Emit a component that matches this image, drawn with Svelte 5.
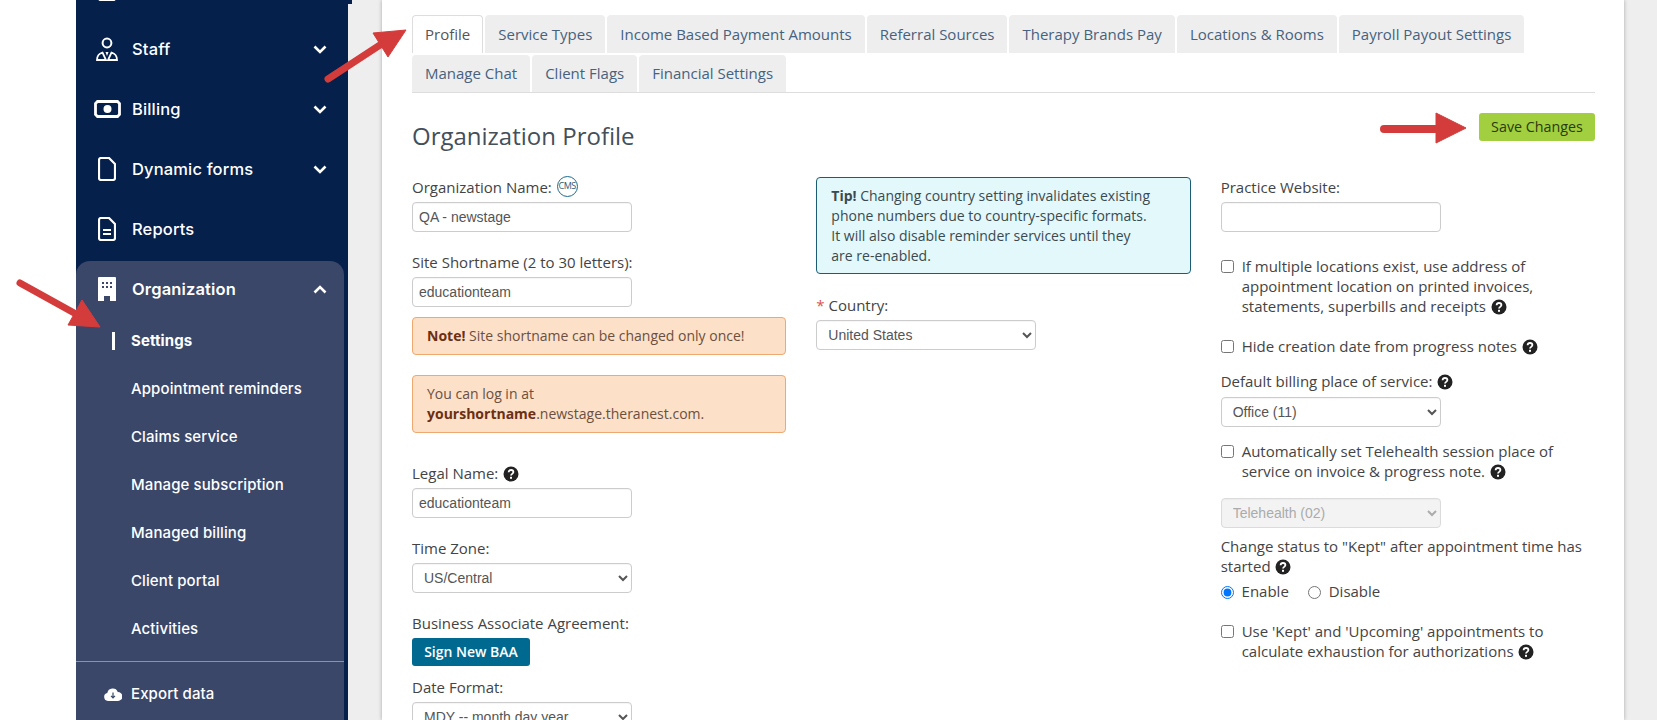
<script lang="ts">
	const tabs = [
		'Profile',
		'Service Types',
		'Income Based Payment Amounts',
		'Referral Sources',
		'Therapy Brands Pay',
		'Locations & Rooms',
		'Payroll Payout Settings',
		'Manage Chat',
		'Client Flags',
		'Financial Settings'
	];
	const subItems = [
		'Settings',
		'Appointment reminders',
		'Claims service',
		'Manage subscription',
		'Managed billing',
		'Client portal',
		'Activities'
	];
</script>

{#snippet help()}
	<svg class="help" viewBox="0 0 16 16" aria-hidden="true">
		<circle cx="8" cy="8" r="7.5" fill="#222" />
		<path d="M5.6 6.2C5.7 4.8 6.7 4 8 4c1.4 0 2.4.8 2.4 2 0 1.9-2.4 1.8-2.4 3.6" fill="none" stroke="#fff" stroke-width="1.8" />
		<rect x="7" y="10.8" width="2" height="2" fill="#fff" />
	</svg>
{/snippet}

{#snippet chevron(up = false)}
	<svg class="chev" viewBox="0 0 14 9" aria-hidden="true">
		<path d={up ? 'M1.5 7.5 7 2l5.5 5.5' : 'M1.5 1.5 7 7l5.5-5.5'} fill="none" stroke="#fff" stroke-width="2.6" />
	</svg>
{/snippet}

<div class="page">
	<aside class="sidebar">
		<div class="scroll-thumb"></div>

		<div class="item">
			<span class="ic">
				<svg width="18" height="24" viewBox="0 0 18 24"><rect x="1" y="1" width="16" height="22" rx="2" fill="none" stroke="#fff" stroke-width="2.2" /></svg>
			</span>
		</div>
		<div class="item">
			<span class="ic">
				<svg width="22" height="24" viewBox="0 0 22 24">
					<circle cx="11" cy="6" r="4.4" fill="none" stroke="#fff" stroke-width="2" />
					<path d="M1 23c0-4.500 2-6.500 5.500-7.500L10 23ZM21 23c0-4.500-2-6.500-5.500-7.500L12 23Z" fill="none" stroke="#fff" stroke-width="1.800" />
					<path d="M9.500 15h3L11 19Z" fill="#fff" />
				</svg>
			</span>
			<span class="label">Staff</span>
			{@render chevron()}
		</div>
		<div class="item">
			<span class="ic">
				<svg width="27" height="18" viewBox="0 0 27 18">
					<path d="M3.500 1.500h20l2 2v11l-2 2h-20l-2-2v-11Z" fill="none" stroke="#fff" stroke-width="2.800" />
					<circle cx="13.500" cy="9" r="4" fill="#fff" />
				</svg>
			</span>
			<span class="label">Billing</span>
			{@render chevron()}
		</div>
		<div class="item">
			<span class="ic">
				<svg width="18" height="24" viewBox="0 0 18 24">
					<path d="M3 1h8l6 6v14a2 2 0 0 1-2 2H3a2 2 0 0 1-2-2V3a2 2 0 0 1 2-2Z" fill="none" stroke="#fff" stroke-width="2.2" />
				</svg>
			</span>
			<span class="label">Dynamic forms</span>
			{@render chevron()}
		</div>
		<div class="item">
			<span class="ic">
				<svg width="18" height="24" viewBox="0 0 18 24">
					<path d="M3 1h8l6 6v14a2 2 0 0 1-2 2H3a2 2 0 0 1-2-2V3a2 2 0 0 1 2-2Z" fill="none" stroke="#fff" stroke-width="2.2" />
					<path d="M5 13h8M5 17h8" stroke="#fff" stroke-width="2" />
				</svg>
			</span>
			<span class="label">Reports</span>
		</div>

		<div class="org">
			<div class="item org-head">
				<span class="ic">
					<svg width="18" height="24" viewBox="0 0 18 24">
						<path d="M1 0h16a1 1 0 0 1 1 1v23h-6v-5H6v5H0V1a1 1 0 0 1 1-1Z" fill="#fff" />
						<path d="M4 5h2v2H4zM8 5h2v2H8zM12 5h2v2h-2zM4 9h2v2H4zM8 9h2v2H8zM12 9h2v2h-2z" fill="#3a4769" />
					</svg>
				</span>
				<span class="label strong">Organization</span>
				{@render chevron(true)}
			</div>
			{#each subItems as sub, i}
				<div class="sub" class:active={i === 0}>{sub}</div>
			{/each}
			<div class="divider"></div>
			<div class="sub export">
				<svg width="18" height="13" viewBox="0 0 18 13">
					<path d="M4 13a4 4 0 0 1-.7-7.900A5.500 5.500 0 0 1 13.800 4 4.500 4.500 0 0 1 14 13Z" fill="#fff" />
					<path d="M9 4.500v5M7 7.800l2 2 2-2" fill="none" stroke="#3a4769" stroke-width="1.200" />
				</svg>
				Export data
			</div>
		</div>
	</aside>

	<div class="gutter">
		<main class="panel">
			<nav class="tabs">
				{#each tabs as tab, i}
					<button class="tab" class:current={i === 0}>{tab}</button>
				{/each}
			</nav>

			<div class="head">
				<h1>Organization Profile</h1>
				<button class="save">Save Changes</button>
			</div>

			<div class="cols">
				<section>
					<div class="label-row">Organization Name: <span class="cms">CMS</span></div>
					<input class="field" value="QA - newstage" />

					<div class="label-row gap">Site Shortname (2 to 30 letters):</div>
					<input class="field" value="educationteam" />
					<div class="note first"><b>Note!</b> Site shortname can be changed only once!</div>
					<div class="note">You can log in at<br /><b>yourshortname</b>.newstage.theranest.com.</div>

					<div class="label-row legal">Legal Name: {@render help()}</div>
					<input class="field" value="educationteam" />

					<div class="label-row gap">Time Zone:</div>
					<select class="field"><option>US/Central</option></select>

					<div class="label-row gap">Business Associate Agreement:</div>
					<button class="baa">Sign New BAA</button>

					<div class="label-row date">Date Format:</div>
					<select class="field"><option>MDY -- month day year</option></select>
				</section>

				<section>
					<div class="tip">
						<b>Tip!</b> Changing country setting invalidates existing<br />
						phone numbers due to country-specific formats.<br />
						It will also disable reminder services until they<br />
						are re-enabled.
					</div>
					<div class="label-row country"><span class="req">*</span> Country:</div>
					<select class="field"><option>United States</option></select>
				</section>

				<section>
					<div class="label-row">Practice Website:</div>
					<input class="field" />

					<label class="check first-check">
						<input type="checkbox" />
						<span>If multiple locations exist, use address of appointment location on printed invoices, statements, superbills and receipts {@render help()}</span>
					</label>
					<label class="check hide-date">
						<input type="checkbox" />
						<span>Hide creation date from progress notes {@render help()}</span>
					</label>

					<div class="label-row billing">Default billing place of service: {@render help()}</div>
					<select class="field"><option>Office (11)</option></select>

					<label class="check auto">
						<input type="checkbox" />
						<span>Automatically set Telehealth session place of service on invoice &amp; progress note. {@render help()}</span>
					</label>
					<select class="field tele" disabled><option>Telehealth (02)</option></select>

					<div class="kept">Change status to "Kept" after appointment time has started {@render help()}</div>
					<div class="radios">
						<label><input type="radio" name="kept" checked /> Enable</label>
						<label><input type="radio" name="kept" /> Disable</label>
					</div>

					<label class="check use-kept">
						<input type="checkbox" />
						<span>Use 'Kept' and 'Upcoming' appointments to calculate exhaustion for authorizations {@render help()}</span>
					</label>
				</section>
			</div>
		</main>
	</div>

	<!-- annotation arrows drawn over the screenshot -->
	<svg class="arrows" width="1657" height="720" viewBox="0 0 1657 720" aria-hidden="true">
		<g fill="#d43c3c" stroke="#d43c3c">
			<path d="M328 79 380 45" stroke-width="7" stroke-linecap="round" />
			<path d="M406 30 373 33 388 57Z" stroke-width="1" />
			<path d="M20 283 76 314" stroke-width="7" stroke-linecap="round" />
			<path d="M100 327 82 300 68 325Z" stroke-width="1" />
			<path d="M1384 129H1440" stroke-width="8" stroke-linecap="round" />
			<path d="M1466 128 1436 113V143Z" stroke-width="1" />
		</g>
	</svg>
</div>

<style>
	:global(body) {
		background: #fff;
	}

	.page {
		position: relative;
		display: flex;
		height: 720px;
		padding-left: 76px;
		overflow: hidden;
		font-family: 'Open Sans', sans-serif;
		font-size: 15px;
		line-height: 20px;
		color: #444;
	}

	.sidebar {
		position: relative;
		flex: none;
		width: 276px;
		height: 761px;
		margin-top: -41px;
		background: #05204a;
		font-family: Inter, sans-serif;
		color: #fff;
	}

	.scroll-thumb {
		position: absolute;
		top: 45px;
		right: 0;
		bottom: 0;
		width: 4px;
		background: #eee;
	}

	.item {
		display: flex;
		align-items: center;
		height: 60px;
		width: 268px;
		box-sizing: border-box;
		padding: 0 17px 0 0;
	}

	.ic {
		display: flex;
		justify-content: center;
		flex: none;
		width: 56px;
		padding-left: 6px;
		box-sizing: border-box;
	}

	.label {
		flex: 1;
		font-size: 16.5px;
		font-weight: 500;
		letter-spacing: 0.15px;
	}

	.label.strong {
		font-weight: 600;
	}

	.chev {
		width: 14px;
		height: 9px;
	}

	.org {
		width: 268px;
		margin-top: 2px;
		height: 500px;
		background: #3a4769;
		border-radius: 14px 14px 0 0;
	}

	.org-head {
		height: 56px;
	}

	.sub {
		position: relative;
		display: flex;
		align-items: center;
		height: 48px;
		padding-left: 55px;
		font-size: 15px;
		font-weight: 500;
		letter-spacing: 0.1px;
	}

	.sub.active {
		font-weight: 700;
	}

	.sub.active::before {
		content: '';
		position: absolute;
		left: 36px;
		top: 15px;
		width: 3px;
		height: 18px;
		background: #fff;
	}

	.divider {
		height: 1px;
		margin-top: 8px;
		background: #8a93a8;
	}

	.export {
		height: 64px;
		padding-left: 28px;
		gap: 9px;
	}

	.gutter {
		flex: 1;
		background: #eee;
		padding: 0 33px 0 30px;
	}

	.panel {
		height: 720px;
		box-sizing: border-box;
		padding: 15px 29px 0 30px;
		background: #fff;
		box-shadow: 0 0 4px rgba(0, 0, 0, 0.3);
	}

	.tabs {
		display: flex;
		flex-wrap: wrap;
		gap: 2px;
		border-bottom: 1px solid #ddd;
	}

	.tab {
		height: 37.5px;
		padding: 0 13px;
		border: none;
		border-radius: 4px 4px 0 0;
		background: #eee;
		font: inherit;
		color: #46627f;
	}

	.tab.current {
		padding: 0 12px;
		background: #fff;
		border: 1px solid #ddd;
		border-bottom: none;
		color: #555;
	}

	.head {
		display: flex;
		justify-content: space-between;
		align-items: flex-start;
		margin-top: 20px;
		margin-bottom: 24px;
	}

	h1 {
		margin: 6px 0 0;
		font-size: 24px;
		font-weight: 400;
		line-height: 34px;
		color: #444f5a;
	}

	.save {
		width: 116px;
		height: 28px;
		padding: 0;
		border: none;
		border-radius: 3px;
		background: #a2cf3f;
		font: inherit;
		font-size: 14.3px;
		color: #2b3a10;
	}

	.cols {
		display: grid;
		grid-template-columns: repeat(3, 1fr);
		column-gap: 30px;
		align-items: start;
	}

	.label-row {
		height: 20px;
		margin-bottom: 5px;
	}

	.label-row.gap {
		margin-top: 20px;
	}

	.label-row.legal {
		margin-top: 30px;
	}

	.label-row.date {
		margin-top: 11px;
	}

	.label-row.country {
		margin-top: 21px;
	}

	.label-row.billing {
		margin-top: 15px;
		margin-bottom: 6px;
	}

	.field {
		display: block;
		width: 220px;
		height: 30px;
		box-sizing: border-box;
		padding: 0 6px;
		border: 1px solid #ccc;
		border-radius: 4px;
		background: #fff;
		font-family: 'Liberation Sans', Arial, sans-serif;
		font-size: 14px;
		color: #555;
		box-shadow: inset 0 1px 1px rgba(0, 0, 0, 0.04);
	}

	select.field {
		padding-left: 7px;
	}

	.field.tele {
		margin-top: 17px;
		background: #eee;
		color: #888;
	}

	.cms {
		display: inline-block;
		width: 21px;
		height: 21px;
		box-sizing: border-box;
		margin-left: 1px;
		margin-top: -1px;
		border: 1.5px solid #1d6a8c;
		border-radius: 50%;
		font-size: 9px;
		letter-spacing: -0.5px;
		line-height: 18px;
		text-align: center;
		color: #1d5d7c;
		vertical-align: top;
	}

	.help {
		display: inline-block;
		width: 16px;
		height: 16px;
		margin-left: 1px;
		vertical-align: -3px;
	}

	.note {
		margin-top: 20px;
		padding: 8px 14px;
		border: 1px solid #efa86f;
		border-radius: 4px;
		background: #fde0c8;
		font-size: 14px;
		color: #6a5040;
	}

	.note.first {
		margin-top: 10px;
	}

	.note b {
		color: #6b2f14;
	}

	.baa {
		display: block;
		width: 118px;
		height: 28px;
		padding: 0;
		border: none;
		border-radius: 3px;
		background: #006990;
		font: inherit;
		font-size: 14px;
		font-weight: 600;
		color: #fff;
	}

	.tip {
		padding: 8px 14px;
		height: 97px;
		box-sizing: border-box;
		border: 1px solid #1d5d74;
		border-radius: 4px;
		background: #e3f8fb;
		font-size: 14px;
		color: #3a4a50;
	}

	.req {
		color: #d9534f;
	}

	.check {
		display: flex;
		gap: 8px;
	}

	.check input {
		flex: none;
		width: 13px;
		height: 13px;
		margin: 4px 0 0;
	}

	.check.first-check {
		margin-top: 24px;
	}

	.check.hide-date {
		margin-top: 20px;
	}

	.check.auto {
		margin-top: 14px;
	}

	.check.use-kept {
		margin-top: 20px;
	}

	.kept {
		margin-top: 8px;
	}

	.radios {
		display: flex;
		gap: 19px;
		margin-top: 5px;
	}

	.radios input {
		width: 13px;
		height: 13px;
		margin: 0 4px 0 0;
		vertical-align: -2px;
	}

	.arrows {
		position: absolute;
		left: 0;
		top: 0;
		pointer-events: none;
	}
</style>
